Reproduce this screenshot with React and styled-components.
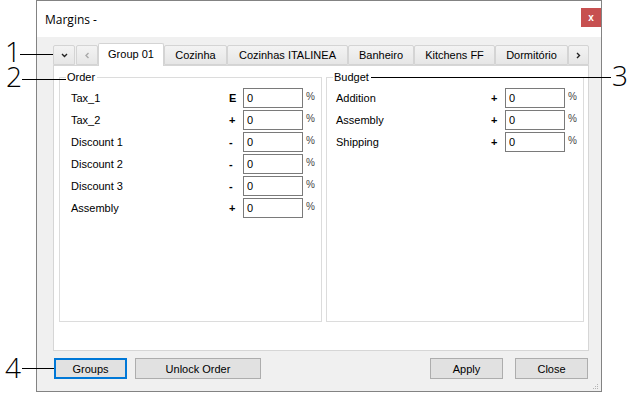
import React from 'react';
import styled, { createGlobalStyle } from 'styled-components';

const GlobalStyle = createGlobalStyle`
  html, body { margin: 0; padding: 0; background: #fff; }
  body {
    font-family: "Liberation Sans", Arial, sans-serif;
    font-size: 11px;
    color: #000;
  }
`;

const Page = styled.div`
  position: relative;
  width: 632px;
  height: 393px;
  padding-left: 36px;
  box-sizing: border-box;
`;

const Window = styled.div`
  position: relative;
  width: 566px;
  height: 392px;
  box-sizing: border-box;
  border: 1px solid #838383;
  background: #f0f0f0;
  display: flex;
  flex-direction: column;
`;

const TitleBar = styled.div`
  height: 36px;
  flex: none;
  background: #fff;
  display: flex;
  align-items: center;
  justify-content: space-between;
  padding-left: 8px;
  font-family: "Open Sans", sans-serif;
  font-size: 12px;
`;

const CloseBox = styled.div`
  align-self: flex-start;
  margin-top: 7px;
  width: 20px;
  height: 19px;
  background: #c75050;
  color: #fff;
  display: flex;
  align-items: center;
  justify-content: center;
  font: bold 10px "Liberation Sans", Arial, sans-serif;
`;

const Body = styled.div`
  flex: 1;
  display: flex;
  flex-direction: column;
  padding: 6px 12px 0 16px;
`;

const TabStrip = styled.div`
  height: 22px;
  display: flex;
  align-items: flex-end;
  position: relative;
  z-index: 1;
`;

const Tab = styled.div`
  box-sizing: border-box;
  width: ${p => p.$w}px;
  height: ${p => (p.$active ? 23 : 20)}px;
  margin-bottom: ${p => (p.$active ? -1 : 0)}px;
  margin-right: ${p => p.$gap || 0}px;
  border: 1px solid #d4d4d4;
  border-bottom: ${p => (p.$active ? 'none' : '1px solid #d4d4d4')};
  border-radius: 2px 2px 0 0;
  background: ${p => (p.$active ? '#fff' : 'linear-gradient(#f3f3f3, #e6e6e6)')};
  display: flex;
  align-items: center;
  justify-content: center;
  padding-bottom: ${p => (p.$active ? 2 : 0)}px;
  white-space: nowrap;
`;

const Panel = styled.div`
  box-sizing: border-box;
  height: 286px;
  border: 1px solid #d6d6d6;
  background: #fff;
  padding: 4px 4px 0 5px;
  display: flex;
  gap: 4px;
  align-items: flex-start;
`;

const GroupBox = styled.fieldset`
  box-sizing: border-box;
  margin: 0;
  width: ${p => p.$w}px;
  height: 252px;
  border: 1px solid #dcdcdc;
  padding: 3px 4px 0 ${p => p.$inset}px;
  min-inline-size: 0;
`;

const Legend = styled.legend`
  margin-left: ${p => 6 - p.$inset}px;
  padding: 0 2px 0 1px;
  line-height: 14px;
  font-size: 11px;
`;

const Rows = styled.div`
  display: grid;
  grid-template-columns: 1fr 17px 60px 14px;
  grid-auto-rows: 22px;
  align-items: center;
`;

const Label = styled.span`
  white-space: nowrap;
`;

const Sign = styled.span`
  font-weight: bold;
  padding-left: 3px;
`;

const Field = styled.input`
  box-sizing: border-box;
  width: 60px;
  height: 20px;
  margin: 0;
  border: 1px solid #7a7a7a;
  padding: 0 0 0 3px;
  font: 11px "Liberation Sans", Arial, sans-serif;
  color: #000;
  -webkit-text-fill-color: #000;
  background: #fff;
  outline: none;
`;

const Percent = styled.span`
  padding-left: 3px;
  font-size: 10px;
  color: #444;
  margin-top: -3px;
`;

const ButtonRow = styled.div`
  margin-top: 7px;
  height: 21px;
  display: flex;
  gap: 8px;
  padding: 0 1px;
`;

const Button = styled.div`
  box-sizing: border-box;
  width: ${p => p.$w}px;
  height: 21px;
  margin-left: ${p => (p.$push ? 'auto' : '0')};
  margin-right: ${p => p.$gap || 0}px;
  border: ${p => (p.$focused ? '2px solid #0078d7' : '1px solid #adadad')};
  background: #e1e1e1;
  display: flex;
  align-items: center;
  justify-content: center;
`;

const Grip = styled.svg`
  position: absolute;
  right: 2px;
  bottom: 1px;
`;

const Digit = styled.div`
  position: absolute;
  left: ${p => p.$x}px;
  top: ${p => p.$y}px;
  font-family: "Open Sans", sans-serif;
  font-weight: 300;
  font-size: 28px;
  line-height: 22px;
  color: #000;
`;

const Leader = styled.div`
  position: absolute;
  left: ${p => p.$x1}px;
  top: ${p => p.$y}px;
  width: ${p => p.$x2 - p.$x1}px;
  height: 1px;
  background: #000;
`;

const Chevron = ({ dir, color }) => {
  const pts = {
    down: '1,2 3.5,4.5 6,2',
    left: '4.5,1 2,3.5 4.5,6',
    right: '2,1 4.5,3.5 2,6',
  }[dir];
  return (
    <svg width="7" height="7" viewBox="0 0 7 7">
      <polyline points={pts} fill="none" stroke={color} strokeWidth="1.4" />
    </svg>
  );
};

const tabs = [
  { name: 'Group 01', w: 66, active: true },
  { name: 'Cozinha', w: 63 },
  { name: 'Cozinhas ITALINEA', w: 121 },
  { name: 'Banheiro', w: 66 },
  { name: 'Kitchens FF', w: 81 },
  { name: 'Dormitório', w: 73 },
];

const orderRows = [
  ['Tax_1', 'E'],
  ['Tax_2', '+'],
  ['Discount 1', '-'],
  ['Discount 2', '-'],
  ['Discount 3', '-'],
  ['Assembly', '+'],
];

const budgetRows = [
  ['Addition', '+'],
  ['Assembly', '+'],
  ['Shipping', '+'],
];

function Group({ title, rows, w, inset }) {
  return (
    <GroupBox $w={w} $inset={inset}>
      <Legend $inset={inset}>{title}</Legend>
      <Rows>
        {rows.map(([label, sign]) => (
          <React.Fragment key={label}>
            <Label>{label}</Label>
            <Sign>{sign}</Sign>
            <Field readOnly value="0" />
            <Percent>%</Percent>
          </React.Fragment>
        ))}
      </Rows>
    </GroupBox>
  );
}

export default function App() {
  return (
    <Page>
      <GlobalStyle />
      <Window>
        <TitleBar>
          <span>Margins -</span>
          <CloseBox>x</CloseBox>
        </TitleBar>
        <Body>
          <TabStrip>
            <Tab $w={22} $gap={1}><Chevron dir="down" color="#222" /></Tab>
            <Tab $w={22}><Chevron dir="left" color="#a8a8a8" /></Tab>
            {tabs.map(t => (
              <Tab key={t.name} $w={t.w} $active={t.active}>{t.name}</Tab>
            ))}
            <Tab $w={21}><Chevron dir="right" color="#222" /></Tab>
          </TabStrip>
          <Panel>
            <Group title="Order" rows={orderRows} w={263} inset={11} />
            <Group title="Budget" rows={budgetRows} w={258} inset={9} />
          </Panel>
          <ButtonRow>
            <Button $w={73} $focused>Groups</Button>
            <Button $w={126}>Unlock Order</Button>
            <Button $w={73} $push $gap={4}>Apply</Button>
            <Button $w={73}>Close</Button>
          </ButtonRow>
        </Body>
        <Grip width="7" height="7" viewBox="0 0 7 7">
          {[[5, 1], [3, 3], [5, 3], [1, 5], [3, 5], [5, 5]].map(([x, y]) => (
            <rect key={`${x}-${y}`} x={x} y={y} width="1" height="1" fill="#b4b4b4" />
          ))}
        </Grip>
      </Window>

      <Digit $x={5} $y={40}>1</Digit>
      <Leader $x1={20} $x2={53} $y={54} />
      <Digit $x={6} $y={65}>2</Digit>
      <Leader $x1={22} $x2={66} $y={79} />
      <Digit $x={612} $y={64}>3</Digit>
      <Leader $x1={371} $x2={611} $y={77} />
      <Digit $x={5} $y={356}>4</Digit>
      <Leader $x1={22} $x2={54} $y={368} />
    </Page>
  );
}
